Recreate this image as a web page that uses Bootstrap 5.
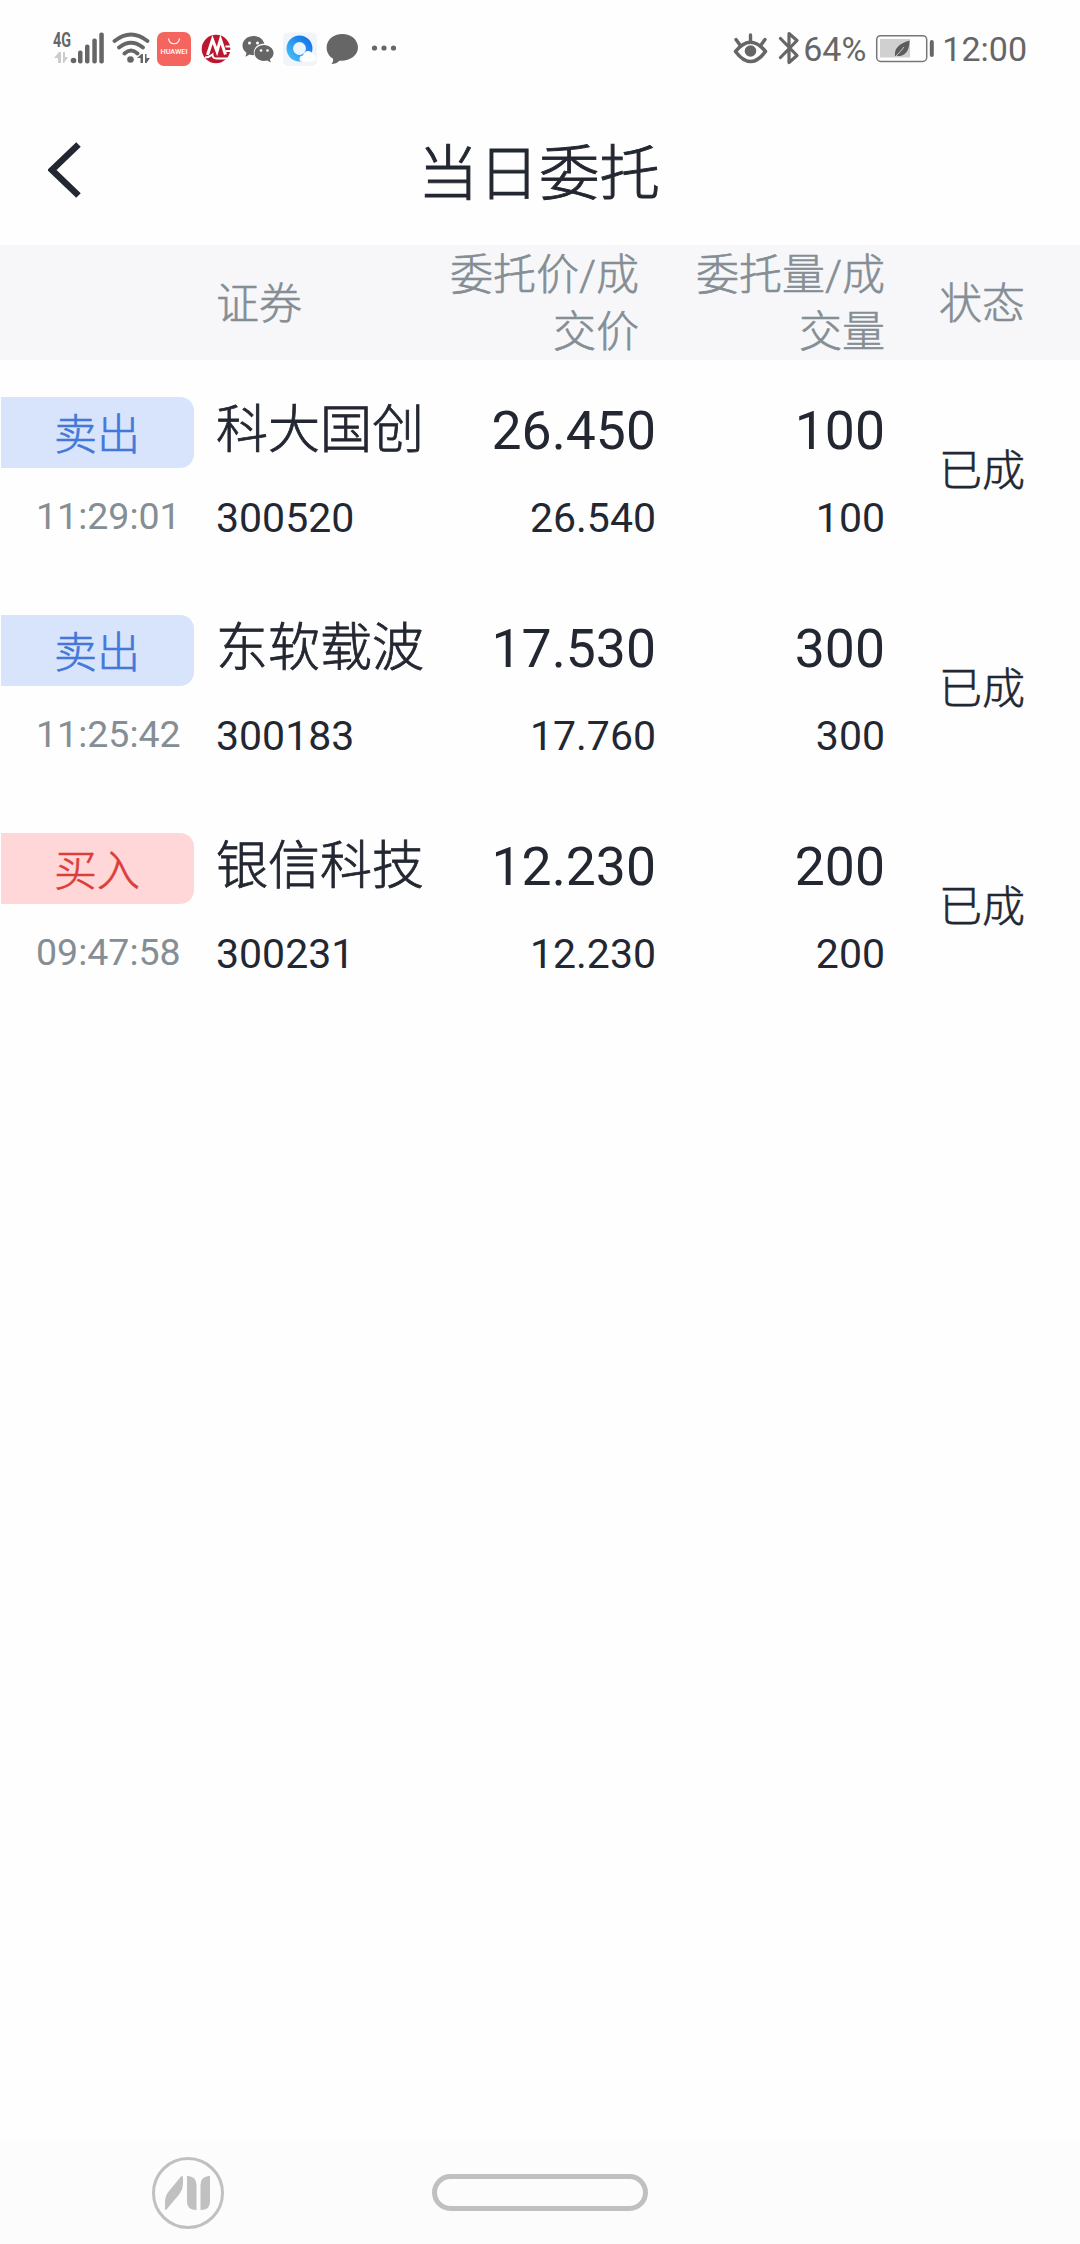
<!DOCTYPE html>
<html lang="zh-CN">
<head>
<meta charset="utf-8">
<meta name="viewport" content="width=device-width, initial-scale=1">
<title>当日委托</title>
<link href="https://cdn.jsdelivr.net/npm/bootstrap@5.3.0/dist/css/bootstrap.min.css" rel="stylesheet">
<style>
body{font-family:Roboto,"Noto Sans CJK SC",sans-serif;color:#232731;background:#fefefe;line-height:1}
.screen{width:1080px;height:2244px}
.status-bar{height:98px;padding:0 53px 0 53px;color:#666}
.status-bar svg{display:block}
.status-text{font-size:34px;line-height:98px}
.status-clock{margin-left:8px}
.title-bar{height:147px}
.title-bar h1{font-size:60.500px;line-height:58px;font-weight:300;margin:0 2px 0 0;-webkit-text-stroke:.9px #232731}
.title-side{width:130px;padding:44px 0 0 48px}
.title-side button{line-height:0}
.order-grid{display:grid;grid-template-columns:216px 204px 236px 229px 195px}
.order-head{height:115px;background:#f7f7fa;color:#858e94;font-size:43px;line-height:57px;font-weight:300;padding-top:2px;-webkit-text-stroke:.6px #858e94}
.head-price{padding-right:17px}
.order-row{height:218px;padding-top:36px}
.side-tag{width:193px;height:71px;margin:1px 0 0 1px;border-radius:0 14px 14px 0;font-size:43px;line-height:76px;padding-left:53px;font-weight:300;-webkit-text-stroke:.6px currentColor}
.sell{background:#d8e4fc;color:#4378d8}
.buy{background:#ffd7d8;color:#dc3d38}
.time{font-size:37.500px;line-height:40px;color:#858e94;padding:28px 0 0 36px}
.stock-name{font-size:52px;line-height:72px;font-weight:300;margin-top:-1px;-webkit-text-stroke:.8px #232731}
.big-num{font-size:53.500px;line-height:72px;margin-top:-1px}
.sub-num{font-size:41px;line-height:44px;padding-top:29px}
.state{font-size:43px;line-height:43px;font-weight:300;padding:54px 1px 0 0;-webkit-text-stroke:.6px #232731}
.head-state{padding-right:1px}
.nav-strip{height:103px;background:#fcfcfc}
.home-pill{width:216px;height:37px;border:5px solid #c0c0c0;border-radius:19px}
.nav-third{width:432px;padding-left:151px}
</style>
</head>
<body>
<div class="screen d-flex flex-column">
  <header class="status-bar d-flex justify-content-between align-items-center">
    <svg width="346" height="40" viewBox="53 29 346 40" fill="#666">
      <text x="53" y="47" font-size="19.500" font-weight="700" textLength="18" lengthAdjust="spacingAndGlyphs">4G</text>
      <path fill="#ccc" d="M54 58l5-6h2v11h-3v-5zM63 52h2v5h3l-4 6h-1z"/>
      <circle cx="73.5" cy="60.500" r="2.800"/>
      <rect x="78" y="50.500" width="4.500" height="13" rx="2"/><rect x="85" y="44.500" width="4.500" height="19" rx="2"/><rect x="92.300" y="38.500" width="4.500" height="25" rx="2"/><rect x="99.300" y="32.500" width="4.500" height="31" rx="2"/>
      <g fill="none" stroke="#666" stroke-width="3.800" stroke-linecap="round"><path d="M114.500 41Q131 28 147.500 41M119 47.500Q131 38 143 47.500M124.500 53.500Q131 47.500 137.500 53.500"/></g>
      <circle cx="130.500" cy="59.500" r="3.300"/>
      <path d="M137 58l4.500-4h1.500v9h-2.500v-5zM145 54h1.500v4h3.500l-3.500 5h-1.500z"/>
      <rect x="157" y="32" width="34" height="34" rx="7" fill="#f5655f"/>
      <path d="M168.500 38.500c1 7 10 7 11 0" fill="none" stroke="#fff" stroke-width="1.200"/>
      <text x="160.500" y="54" font-size="7" font-weight="500" fill="#fff" textLength="27" lengthAdjust="spacingAndGlyphs">HUAWEI</text>
      <circle cx="216" cy="49" r="14.300" fill="#bb1830"/>
      <path d="M207.500 55l5-15.500 4.500 12 3.500-12 5 15" fill="none" stroke="#fff" stroke-width="3"/>
      <path d="M205 57.500q4 0 7.500-3 0 4 4 4h12M225.500 46.500h6M226 51h5.500" fill="none" stroke="#fff" stroke-width="1.800"/>
      <path d="M253.500 36c-6 0-11 4.200-11 9.500 0 3.200 1.600 5.500 4 7.200l-1 4 4-2.200c1.600.5 3 .7 4.500.6-1.500-7.500 4.500-11.600 10.300-11.300-1-4.700-5.500-7.800-10.800-7.800z"/>
      <path d="M264 45c-5.500 0-9.500 3.700-9.500 8s4 8 9.500 8l3.200-.5 3.600 2-.9-3.200c2.400-1.500 3.700-3.700 3.700-6.300 0-4.300-4.300-8-9.600-8z"/>
      <g fill="#fff"><circle cx="249.500" cy="43" r="1.500"/><circle cx="257.500" cy="43" r="1.500"/><circle cx="261" cy="50.500" r="1.300"/><circle cx="267.500" cy="50.500" r="1.300"/></g>
      <defs><linearGradient id="ringBlue" x1="0" y1="1" x2="1" y2="0"><stop stop-color="#43bbf7"/><stop offset="1" stop-color="#1472e8"/></linearGradient></defs>
      <rect x="283" y="32.500" width="34" height="33.500" rx="5" fill="#f1f4f9"/>
      <circle cx="299.500" cy="48.500" r="9.700" fill="#eef4fb" stroke="url(#ringBlue)" stroke-width="6.500"/>
      <path d="M302 61.500c-4-1-3-6 1-6 1-6 9-6 10-.5 4.500 0 4.500 6.500 0 6.500z" fill="#fff"/>
      <path d="M342.300 34c-8.800 0-15.700 5.800-15.700 13.500 0 5 2.500 8.800 6.500 11.200.3 2-.5 3.800-1.500 5.300 3 0 5.700-1.200 7.800-3.300 10 .8 18.600-5 18.600-13.200 0-7.700-7-13.500-15.700-13.500z"/>
      <circle cx="374.500" cy="48" r="2.600"/><circle cx="384" cy="48" r="2.600"/><circle cx="393.500" cy="48" r="2.600"/>
    </svg>
    <div class="d-flex align-items-center">
      <svg class="me-1" width="66" height="40" viewBox="733 29 66 40" fill="none" stroke="#666">
        <path d="M735.500 51.500q15-18.500 30 0-15 20-30 0z" stroke-width="3.600" stroke-linejoin="round"/>
        <circle cx="750.500" cy="51" r="5.800" fill="#666" stroke="none"/>
        <path d="M750.500 42v-7M740 45l-4-5.500M761 45l4-5.500" stroke-width="3.400" stroke-linecap="round"/>
        <path d="M780.500 38.500l16.500 17-8 7v-29l8 7-16.500 17" stroke-width="3.200" stroke-linecap="round" stroke-linejoin="round"/>
      </svg>
      <span class="status-text">64%</span>
      <svg class="ms-2" width="60" height="40" viewBox="874 29 60 40">
        <rect x="876.700" y="35.700" width="50" height="25.800" rx="4" fill="none" stroke="#777" stroke-width="1.500"/>
        <rect x="880" y="39" width="30" height="18.500" fill="#d0d0d0"/>
        <rect x="929.800" y="40" width="4" height="17" rx="2" fill="#666"/>
        <path d="M895 56q-1.500-11 14.500-15.500 0 17-14.500 15.500z" fill="#5c5c5c"/><path d="M896 56q5-5 8-9" stroke="#ccc" fill="none"/>
      </svg>
      <span class="status-text status-clock">12:00</span>
    </div>
  </header>

  <div class="title-bar d-flex justify-content-between align-items-start">
    <div class="title-side"><button type="button" class="border-0 bg-transparent p-0" aria-label="返回">
      <svg width="34" height="56" viewBox="0 0 34 56"><path d="M30.500 2.500L4 28l26.500 25.500" fill="none" stroke="#232731" stroke-width="6.500"/></svg>
    </button></div>
    <h1 class="pt-5">当日委托</h1>
    <div class="title-side"></div>
  </div>

  <main class="flex-grow-1">
    <div class="order-grid order-head align-items-center">
      <div></div><div>证券</div>
      <div class="head-price text-end">委托价/成<br>交价</div>
      <div class="text-end">委托量/成<br>交量</div>
      <div class="head-state text-center">状态</div>
    </div>
    <div class="order-grid order-row">
      <div><div class="side-tag sell">卖出</div><div class="time">11:29:01</div></div>
      <div><div class="stock-name text-nowrap">科大国创</div><div class="sub-num">300520</div></div>
      <div class="text-end"><div class="big-num">26.450</div><div class="sub-num">26.540</div></div>
      <div class="text-end"><div class="big-num">100</div><div class="sub-num">100</div></div>
      <div class="state text-center">已成</div>
    </div>
    <div class="order-grid order-row">
      <div><div class="side-tag sell">卖出</div><div class="time">11:25:42</div></div>
      <div><div class="stock-name text-nowrap">东软载波</div><div class="sub-num">300183</div></div>
      <div class="text-end"><div class="big-num">17.530</div><div class="sub-num">17.760</div></div>
      <div class="text-end"><div class="big-num">300</div><div class="sub-num">300</div></div>
      <div class="state text-center">已成</div>
    </div>
    <div class="order-grid order-row">
      <div><div class="side-tag buy">买入</div><div class="time">09:47:58</div></div>
      <div><div class="stock-name text-nowrap">银信科技</div><div class="sub-num">300231</div></div>
      <div class="text-end"><div class="big-num">12.230</div><div class="sub-num">12.230</div></div>
      <div class="text-end"><div class="big-num">200</div><div class="sub-num">200</div></div>
      <div class="state text-center">已成</div>
    </div>
  </main>

  <footer class="nav-strip d-flex align-items-center">
    <div class="nav-third">
      <svg class="d-block" width="74" height="74" viewBox="0 0 74 74" fill="#c0c0c0">
        <circle cx="37" cy="37" r="34.500" fill="none" stroke="#c0c0c0" stroke-width="3"/>
        <path d="M14 53V46q0-6 4-11L30 20.500q2-1.500 2 1V28q0 5-3.500 10L15.500 53.500q-1.500 1-1.500-.5z"/>
        <path d="M36 20h1.500q8 1 8 9v25H44q-8-1-8-8z"/>
        <path d="M59 20h-1.500q-8 1-8 9v25H51q8-1 8-8z"/>
      </svg>
    </div>
    <div class="home-pill"></div>
  </footer>
</div>
<script src="https://cdn.jsdelivr.net/npm/bootstrap@5.3.0/dist/js/bootstrap.bundle.min.js"></script>
</body>
</html>
